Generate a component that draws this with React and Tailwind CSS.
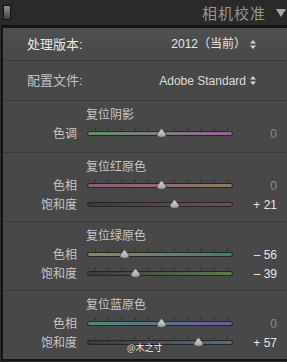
import React from "react";

const FONT = "font-['Liberation_Sans','Noto_Sans_CJK_SC',sans-serif]";

function UpDown() {
  return (
    <svg width="6" height="9" viewBox="0 0 6 9" className="ml-[4px]">
      <path d="M3 0 L6 3.6 H0 Z M3 9 L6 5.4 H0 Z" fill="#d2d2d2" />
    </svg>
  );
}

function Thumb() {
  return (
    <svg width="11" height="10" viewBox="0 0 11 10">
      <defs>
        <linearGradient id="tg" x1="0" y1="0" x2="0" y2="1">
          <stop offset="0" stopColor="#e0e0e0" />
          <stop offset="1" stopColor="#9a9a9a" />
        </linearGradient>
      </defs>
      <path d="M5.5 0.5 L10 6 Q10.3 9.3 5.5 9.3 Q0.7 9.3 1 6 Z" fill="url(#tg)" stroke="#4a4a4a" strokeWidth="0.8" />
    </svg>
  );
}

const TICKS = [0, 1, 2, 3, 4, 5, 6, 7, 8, 9, 10];

function Slider({ label, value, grad }) {
  const left = 74 + value * 0.66;
  const text = value === 0 ? "0" : value > 0 ? `+ ${value}` : `– ${-value}`;
  return (
    <div className="flex items-center h-[19px]">
      <div className="w-[74px] text-right text-[12px] leading-none text-[#c6c6c6]">{label}</div>
      <div className="relative ml-[10px] w-[146px] h-[19px]">
        <svg width="146" height="19" className="absolute left-0 top-0">
          {TICKS.map((i) => (
            <rect key={i} x={8 + i * 13.2} y="4" width="1" height="2" fill="#2c2c2c" />
          ))}
        </svg>
        <div className={`absolute left-0 right-0 top-[7px] h-[5px] rounded-full border border-[#262626] ${grad}`} />
        <div className="absolute top-[4px]" style={{ left: `${left - 5.5}px` }}>
          <Thumb />
        </div>
      </div>
      <div className={`flex-1 text-right pr-[10px] text-[12px] leading-none ${value === 0 ? "text-[#8a8a8a]" : "text-[#e6e6e6]"}`}>
        {text}
      </div>
    </div>
  );
}

function Section({ title, children, last }) {
  return (
    <div className={`border-t border-[#393939] pt-[5px] ${last ? "pb-[9px]" : "pb-[7px]"}`}>
      <div className="h-[18px] flex items-center pl-[83px] text-[12px] leading-none text-[#c6c6c6]">{title}</div>
      {children}
    </div>
  );
}

export default function App() {
  return (
    <div className={`relative w-[287px] h-[362px] bg-[#2a2a2a] overflow-hidden ${FONT}`}>
      <div className="h-[25px] flex items-center">
        <div className="ml-[3px] w-[8px] h-[15px] border border-[#121212] bg-linear-to-b from-[#8c8c8c] via-[#6a6a6a] to-[#3e3e3e]" />
        <div className="flex-1" />
        <div className="text-[15px] leading-none tracking-[1px] text-[#959595] font-['Noto_Sans_CJK_SC',sans-serif]">相机校准</div>
        <svg width="10" height="8" viewBox="0 0 10 8" className="ml-[10px] mr-[1px]">
          <path d="M0 0 H10 L5 8 Z" fill="#a8a8a8" />
        </svg>
      </div>
      <div className="ml-[1px] border-t-[3px] border-l-2 border-b-2 border-[#141414] bg-[#484848]">
        <div className="h-[32px] flex items-center pl-[24px] bg-linear-to-b from-[#4f4f4f] to-[#494949]">
          <div className="text-[13px] leading-none text-[#e8e8e8]">处理版本:</div>
          <div className="flex-1" />
          <div className="flex items-center pr-[31px] text-[12px] leading-none text-[#e6e6e6]">
            <span>2012（当前）</span>
            <UpDown />
          </div>
        </div>
        <div className="h-[40px] flex items-center pl-[24px] border-t border-[#393939]">
          <div className="text-[13px] leading-none text-[#c2c2c2]">配置文件:</div>
          <div className="flex-1" />
          <div className="flex items-center pr-[31px] text-[12px] leading-none text-[#dcdcdc]">
            <span>Adobe Standard</span>
            <UpDown />
          </div>
        </div>
        <Section title="复位阴影" last>
          <Slider label="色调" value={0} grad="bg-linear-to-r from-[#5f9160] to-[#96609a]" />
        </Section>
        <Section title="复位红原色">
          <Slider label="色相" value={0} grad="bg-linear-to-r from-[#8c5a80] to-[#8e7a5c]" />
          <Slider label="饱和度" value={21} grad="bg-linear-to-r from-[#3a3a3a] to-[#7e4a4a]" />
        </Section>
        <Section title="复位绿原色">
          <Slider label="色相" value={-56} grad="bg-linear-to-r from-[#8a8a52] to-[#3f7c7e]" />
          <Slider label="饱和度" value={-39} grad="bg-linear-to-r from-[#3a3a3a] to-[#5c7c4c]" />
        </Section>
        <Section title="复位蓝原色">
          <Slider label="色相" value={0} grad="bg-linear-to-r from-[#4a8a78] to-[#6a5a9c]" />
          <Slider label="饱和度" value={57} grad="bg-linear-to-r from-[#3a3a3a] to-[#4e6e8c]" />
        </Section>
      </div>
      <div className="absolute left-[127px] top-[343px] text-[9px] leading-none text-white [text-shadow:0_0_1px_#000] font-['Noto_Sans_CJK_SC',sans-serif]">
        @木之寸
      </div>
    </div>
  );
}
